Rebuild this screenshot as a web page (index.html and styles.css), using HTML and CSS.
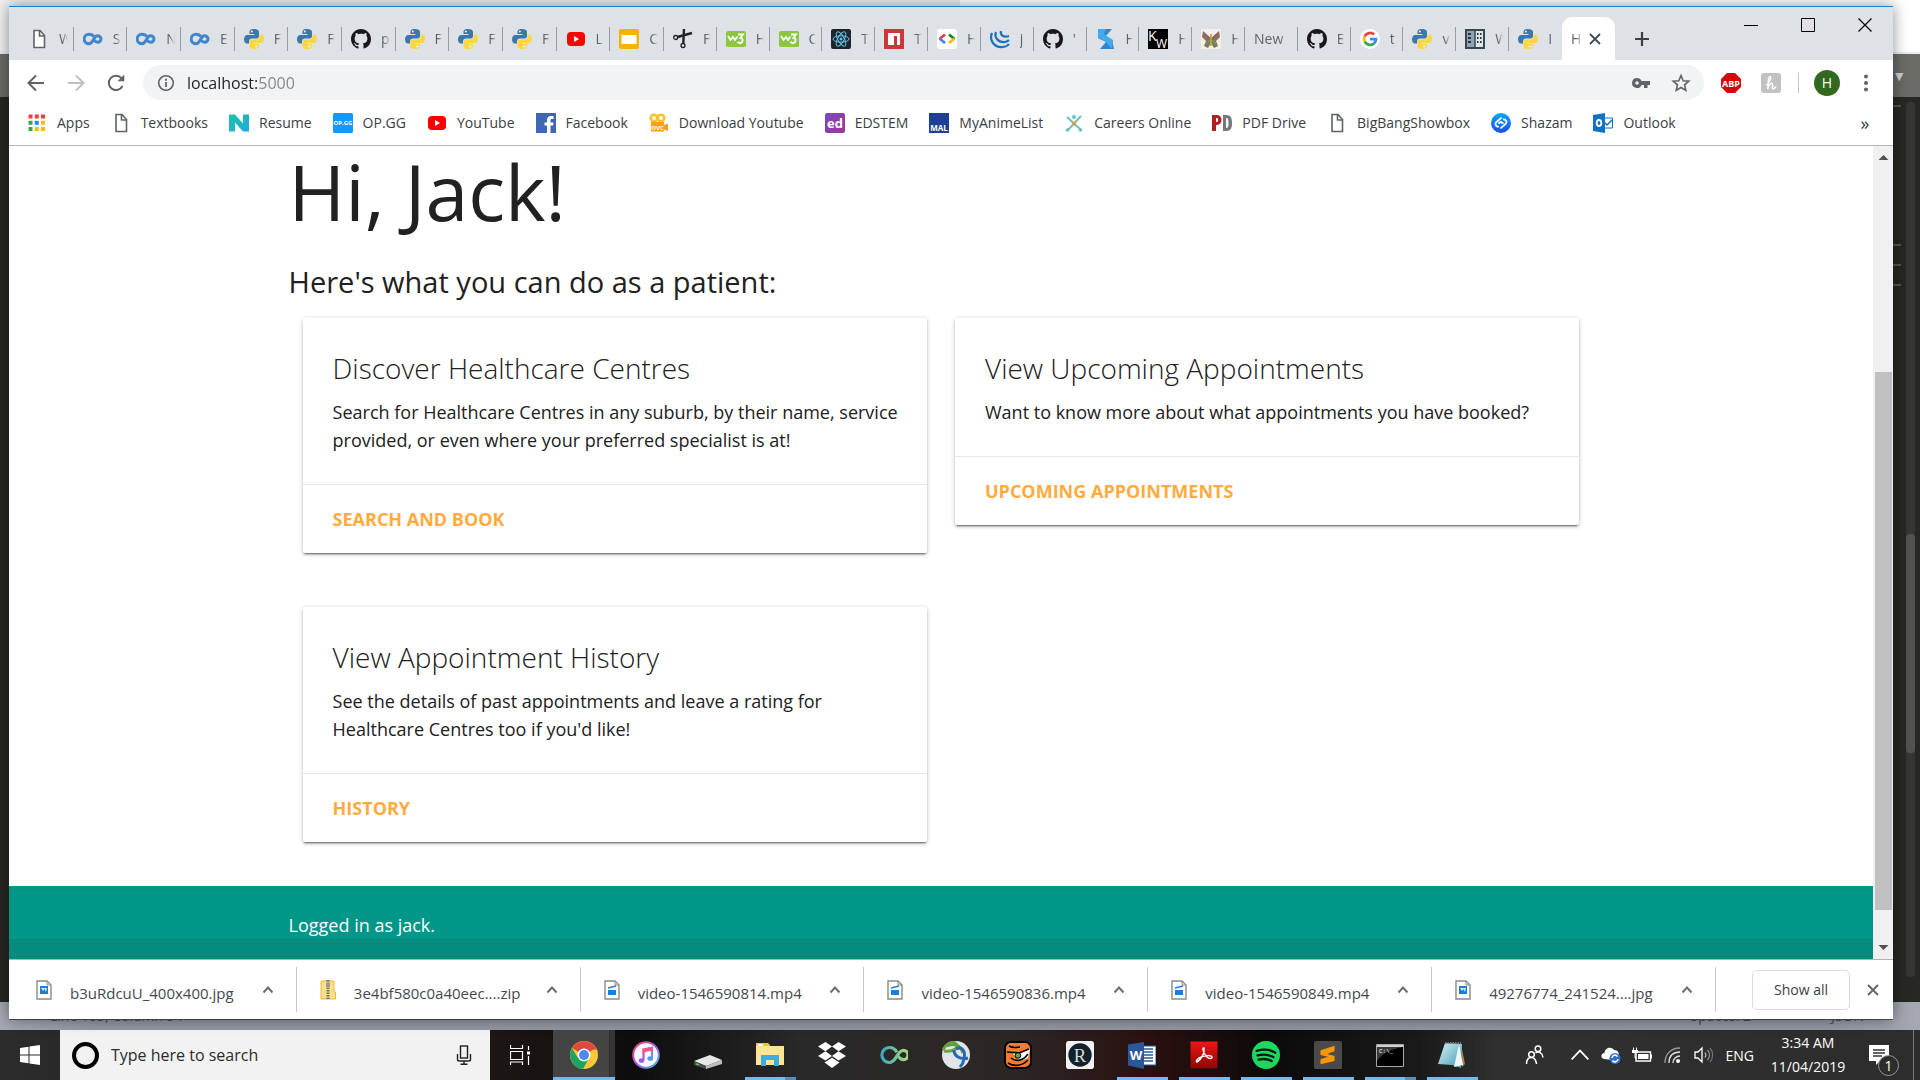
FILE: index.html
```html
<!DOCTYPE html>
<html lang="en">
<head>
<meta charset="utf-8">
<title>Home</title>
<link rel="stylesheet" href="styles.css">
</head>
<body>
<svg class="sprite" aria-hidden="true">
  <defs>
    <linearGradient id="g-n" x1="0" x2="1" y2="1"><stop stop-color="#1cc4a4"/><stop offset="1" stop-color="#24a8e0"/></linearGradient>
    <linearGradient id="g-ed" x1="0" x2="1" y2="1"><stop stop-color="#7a4bb8"/><stop offset="1" stop-color="#a0359c"/></linearGradient>
    <linearGradient id="g-shz" x2="0" y2="1"><stop stop-color="#08a8ff"/><stop offset="1" stop-color="#1a4cf5"/></linearGradient>
    <linearGradient id="g-it" x1="0" x2="1" y2="1"><stop stop-color="#fb3f6c"/><stop offset=".5" stop-color="#a65df0"/><stop offset="1" stop-color="#2fc3f5"/></linearGradient>
    <linearGradient id="g-inf" x1="0" x2="1"><stop stop-color="#3aa7c4"/><stop offset="1" stop-color="#a8dc7a"/></linearGradient>
    <linearGradient id="g-pdf" x2="0" y2="1"><stop stop-color="#f01414"/><stop offset="1" stop-color="#8c0606"/></linearGradient>
    <linearGradient id="g-np" x1="0" x2="1" y2="1"><stop stop-color="#d8f2f6"/><stop offset="1" stop-color="#3f9bb0"/></linearGradient>
  </defs>
  <symbol id="page" viewBox="0 0 20 20"><path d="M5 1.500h6l4.500 5v12H5z" fill="#fff" stroke="#5f6368" stroke-width="1.600"/><path d="M10.500 1.500v5.500h5" fill="none" stroke="#5f6368" stroke-width="1.600"/></symbol>
  <symbol id="coursera" viewBox="0 0 20 20"><path d="M10.800 7.200C9.600 5.900 8 5.200 6 5.200a4.800 4.800 0 0 0 0 9.600c4.800 0 4-8 8.500-8 1.800 0 3.500 1.400 3.500 3.200s-1.500 3.200-3.500 3.200c-1.500 0-2.500-.8-3.200-1.900" fill="none" stroke="#3f86cf" stroke-width="3"/></symbol>
  <symbol id="python" viewBox="0 0 20 20"><path d="M10 0C6 0 5.500 1.500 5.500 3v2h5v1H3.500C1.500 6 0 7.500 0 10.300s1.300 4.200 3 4.200H5v-2.300C5 10.500 6.300 9.500 8 9.500h4.500c1.500 0 2.500-1 2.500-2.500V3c0-2-2-3-5-3z" fill="#3b77a8"/><circle cx="7.800" cy="2.600" r="1" fill="#fff"/><path d="M10 20c4 0 4.800-1.500 4.800-3v-2h-5v-1h7c2 0 3.200-1.500 3.200-4.300S18.700 5.500 17 5.500h-1.300v2.300c0 1.700-1.300 2.700-3 2.700H8.300C6.800 10.500 5.500 11.500 5.500 13v4c0 2 1.500 3 4.500 3z" fill="#fdd644"/><circle cx="12.300" cy="17.400" r="1" fill="#fff"/></symbol>
  <symbol id="github" viewBox="0 0 16 16"><path fill="#17181b" d="M8 0C3.580 0 0 3.580 0 8c0 3.540 2.290 6.530 5.470 7.590.4.070.55-.17.55-.38 0-.19-.01-.82-.01-1.490-2.010.37-2.530-.49-2.690-.94-.09-.23-.48-.94-.82-1.130-.28-.15-.68-.52-.01-.53.63-.01 1.080.58 1.230.82.720 1.210 1.870.87 2.330.66.070-.52.280-.87.510-1.070-1.780-.2-3.640-.89-3.640-3.950 0-.87.310-1.590.82-2.150-.08-.2-.36-1.020.08-2.120 0 0 .67-.21 2.200.82.640-.18 1.320-.27 2-.27s1.360.09 2 .27c1.530-1.040 2.200-.82 2.200-.82.440 1.100.16 1.920.08 2.120.510.56.820 1.270.820 2.150 0 3.070-1.870 3.750-3.650 3.950.29.250.54.730.54 1.480 0 1.070-.01 1.930-.01 2.200 0 .21.150.46.550.38A8.010 8.010 0 0 0 16 8c0-4.420-3.580-8-8-8z"/></symbol>
  <symbol id="youtube" viewBox="0 0 20 20"><rect x="1" y="3" width="18" height="14" rx="4" fill="#f00"/><path d="M8 7l5 3-5 3z" fill="#fff"/></symbol>
  <symbol id="slides" viewBox="0 0 20 20"><rect width="20" height="20" rx="2" fill="#f5b400"/><rect x="2.500" y="6" width="15" height="9" fill="#fff"/></symbol>
  <symbol id="scissors" viewBox="0 0 20 20"><path d="M4.500 8L19 4M10.300 14.500L11 0" stroke="#222" stroke-width="2.400"/><circle cx="2.700" cy="8.500" r="2" fill="none" stroke="#222" stroke-width="1.300"/><circle cx="10" cy="16.500" r="2" fill="none" stroke="#222" stroke-width="1.300"/></symbol>
  <symbol id="w3" viewBox="0 0 20 20"><rect y="2" width="20" height="16" rx="2" fill="#8ac73e"/><path d="M2 7l2.500 4 2.500-3 2 3 2.500-3.500M12 5.500h5l-2.500 3.300c3 0 2.800 5.200-.5 5.200-1.200 0-2-.4-2.500-1.300" fill="none" stroke="#fff" stroke-width="1.800"/></symbol>
  <symbol id="react" viewBox="0 0 20 20"><rect width="20" height="20" rx="2" fill="#20232a"/><g fill="none" stroke="#61c8e6" stroke-width="1"><ellipse cx="10" cy="10" rx="8" ry="3.200"/><ellipse cx="10" cy="10" rx="8" ry="3.200" transform="rotate(60 10 10)"/><ellipse cx="10" cy="10" rx="8" ry="3.200" transform="rotate(120 10 10)"/></g><circle cx="10" cy="10" r="1.500" fill="#61c8e6"/></symbol>
  <symbol id="npm" viewBox="0 0 20 20"><path fill="#cb3837" d="M0 0h20v20H0z"/><path fill="#fff" d="M4 4h12v12h-3V7h-3v9H4z"/></symbol>
  <symbol id="gdev" viewBox="0 0 20 20"><rect width="20" height="20" rx="3" fill="#fff"/><g fill="none" stroke-width="2.800"><path d="M8 5.500L2.500 10" stroke="#ea4335"/><path d="M2.500 9.500L8 14" stroke="#4285f4"/><path d="M12 5.500l5.500 4.500" stroke="#188038"/><path d="M17.500 9.500L12 14" stroke="#fbbc04"/></g></symbol>
  <symbol id="jquery" viewBox="0 0 20 20"><g fill="none" stroke="#1b74b8" stroke-width="2.200"><path d="M2 4c-3 7 2 15 11 14 3-.3 5-1.500 6-3"/><path d="M6 3c-2 5 2 11 9 10 2-.3 3-1 4-2"/><path d="M11 2c-1 3.500 2 7 8 5"/></g></symbol>
  <symbol id="sk" viewBox="0 0 20 20"><path d="M2 0h14L9 8H2z" fill="#2f86cf"/><path d="M18 20H4l6-7-8-4V4l14 7z" fill="#2f86cf"/><path d="M2 0h8l-2 5 9 6-1 9-6-7-8-5z" fill="#45a9ee"/></symbol>
  <symbol id="moth" viewBox="0 0 20 20"><path d="M0 0h20v20H0z" fill="#f4f0ea"/><path d="M10 9L2 2 1 8l4 4-2 5 4 2 3-5 3 5 4-2-2-5 4-4-1-6z" fill="#85735f"/><path d="M3 4l6 8M17 4l-6 8" stroke="#b5477f"/><path d="M5 15l4-4M15 15l-4-4" stroke="#5aa85a" stroke-width="1.500"/><path d="M10 5v12" stroke="#c9a227" stroke-width="1.600"/></symbol>
  <symbol id="google" viewBox="0 0 20 20"><circle cx="10" cy="10" r="10" fill="#fff"/><g fill="none" stroke-width="2.800"><path d="M14.200 5.600A6 6 0 0 0 4.700 7.300" stroke="#ea4335"/><path d="M4.700 7.300a6 6 0 0 0 0 5.400" stroke="#fbbc05"/><path d="M4.700 12.700a6 6 0 0 0 9.300 1.700" stroke="#34a853"/><path d="M14 14.400c1.300-1.100 2-2.700 2-4.300h-6" stroke="#4285f4"/></g></symbol>
  <symbol id="wiki" viewBox="0 0 20 20"><path d="M1 1h18v18H1z" fill="#8fa6b2" stroke="#37474f" stroke-width="2"/><path d="M10 2h8v16h-8z" fill="#dfe6ea"/><path d="M10 1v18" stroke="#37474f" stroke-width="1.500"/><path d="M3 5h3M3 9h3M3 13h3M12 5h1.500M12 9h1.500M12 13h1.500M15 5h1.500M15 9h1.500M15 13h1.500" stroke="#263238" stroke-width="2"/></symbol>

  <symbol id="back" viewBox="0 0 20 20"><path d="M18 10H3M10 2.500L2.500 10l7.500 7.500" fill="none" stroke="currentColor" stroke-width="2"/></symbol>
  <symbol id="fwd" viewBox="0 0 20 20"><path d="M2 10h15M10 2.500l7.500 7.500-7.500 7.500" fill="none" stroke="currentColor" stroke-width="2"/></symbol>
  <symbol id="reload" viewBox="0 0 20 20"><path d="M16.500 13A7.200 7.200 0 1 1 15.500 5.200" fill="none" stroke="currentColor" stroke-width="2"/><path d="M18.300 1.500v6.800h-6.800z" fill="currentColor"/></symbol>
  <symbol id="info" viewBox="0 0 20 20"><circle cx="10" cy="10" r="7.300" fill="none" stroke="#5f6368" stroke-width="1.600"/><path d="M10 9v5M10 5.800v2" stroke="#5f6368" stroke-width="1.800"/></symbol>
  <symbol id="key" viewBox="0 0 20 20"><path d="M6 5a5 5 0 1 0 4.600 7H13v3h3.500v-3H19V8h-8.400A5 5 0 0 0 6 5zm0 3.200a1.800 1.800 0 1 1 0 3.600 1.800 1.800 0 0 1 0-3.600z" fill="#5f6368" fill-rule="evenodd"/></symbol>
  <symbol id="star" viewBox="0 0 20 20"><path d="M10 2.500l2.200 5.200 5.600.5-4.200 3.700 1.200 5.500-4.800-2.900-4.800 2.900 1.200-5.500-4.200-3.700 5.600-.5z" fill="none" stroke="#5f6368" stroke-width="1.600"/></symbol>
  <symbol id="honey" viewBox="0 0 20 20"><rect width="20" height="20" rx="3" fill="#c2c2c2"/><path d="M5 12c3.500-2 6-8 4-8.500-2 0-2 7-2.200 12.500 1-4 3-6.500 4.500-5.500s-.8 4 .2 5 2.500-.5 3.500-2" fill="none" stroke="#fff" stroke-width="1.500"/></symbol>

  <symbol id="apps" viewBox="0 0 20 20"><path d="M1.500 1.500h4v4h-4zM7.800 1.500h4v4h-4zM14 1.500h4v4h-4z" fill="#ea4335"/><path d="M1.500 7.800h4v4h-4zM1.500 14h4v4h-4z" fill="#34a853"/><path d="M7.800 7.800h4v4h-4z" fill="#1a8cff"/><path d="M14 7.800h4v4h-4zM14 14h4v4h-4zM7.800 14h4v4h-4z" fill="#fbbc05"/></symbol>
  <symbol id="novo" viewBox="0 0 20 20"><path d="M0 1.500h6l8 9V1.500h6v17h-6l-8-9v9H0z" fill="url(#g-n)"/></symbol>
  <symbol id="facebook" viewBox="0 0 20 20"><path fill="#4267b2" d="M0 0h20v20H0z"/><path fill="#fff" d="M11 20v-7.500H8.500v-3H11V7.200C11 4.500 12.500 3 15 3h2.500v3h-1.800c-1 0-1.200.5-1.200 1.300v2.200h3l-.4 3h-2.600V20z"/></symbol>
  <symbol id="careers" viewBox="0 0 20 20"><path d="M3 4l14 13M17 3L4 17" stroke="#6cc0bf" stroke-width="2"/><circle cx="10" cy="4" r="2" fill="#6cc0bf"/><circle cx="3.500" cy="17" r="1.800" fill="#6cc0bf"/><circle cx="16.500" cy="17" r="1.800" fill="#6cc0bf"/><circle cx="10" cy="10.500" r="2" fill="#f39a2d"/></symbol>
  <symbol id="pdfdrive" viewBox="0 0 20 20"><path fill-rule="evenodd" d="M0 2h5c6 0 6 10 0 10H4v6H0zm4 3v4h1c1.500 0 1.500-4 0-4z" fill="#b01f24"/><path fill-rule="evenodd" d="M11 2h3c5 0 6 3 6 8s-1 8-6 8h-3zm3 3v10c2 0 2.500-1 2.500-5S16 5 14 5z" fill="#77787b"/></symbol>
  <symbol id="shazam" viewBox="0 0 20 20"><circle cx="10" cy="10" r="10" fill="url(#g-shz)"/><path d="M8 13.500c-2 .5-3.500-1-3.500-2.800C4.500 8.500 8 7.500 10.500 4.500M12 6.500c2-.5 3.500 1 3.500 2.800 0 2.200-3.500 3.200-6 6.200M7.500 10.500l2-1.500c1-.5 1 2 3 .5" fill="none" stroke="#fff" stroke-width="1.800"/></symbol>
  <symbol id="outlook" viewBox="0 0 20 20"><path d="M10 5h9.500v10H10z" fill="#fff" stroke="#0f72c5"/><path d="M11 9l3 3 5-5" fill="none" stroke="#0f72c5" stroke-width="1.500"/><path d="M0 2l12-2v20L0 18z" fill="#0f72c5"/><ellipse cx="6" cy="10" rx="2.300" ry="3" fill="none" stroke="#fff" stroke-width="1.800"/></symbol>

  <symbol id="f-jpg" viewBox="0 0 16 20"><path d="M1 1h10l4 4v14H1z" fill="#fff" stroke="#8a8a8a" stroke-width="1.400"/><path d="M11 1v4h4" fill="none" stroke="#8a8a8a"/><path d="M4 6h8v8H4z" fill="#1b7fd8"/><path d="M5 8l2 3 1.500-2 1.500 3 1-4z" fill="#cfe6fa"/></symbol>
  <symbol id="f-mp4" viewBox="0 0 16 20"><path d="M1 1h10l4 4v14H1z" fill="#fff" stroke="#8a8a8a" stroke-width="1.400"/><path d="M11 1v4h4" fill="none" stroke="#8a8a8a"/><path d="M4 10h8v5H4z" fill="#1b7fd8"/><path d="M4 8l8-2" stroke="#1b7fd8" stroke-width="1.800"/></symbol>
  <symbol id="f-zip" viewBox="0 0 16 20"><path d="M1 1h13v11h1.500v7H1z" fill="#fbe08a" stroke="#e8b93c"/><path d="M8 0v19" stroke="#6f6f6f" stroke-width="3" stroke-dasharray="1.500 1"/><path d="M6 3h4v4H6z" fill="#9a9a9a"/></symbol>
  <symbol id="caret" viewBox="0 0 12 12"><path d="M1.500 8.500L6 3.500l4.500 5" fill="none" stroke="currentColor" stroke-width="2"/></symbol>
  <symbol id="cross" viewBox="0 0 12 12"><path d="M1 1l10 10M11 1L1 11" stroke="currentColor" stroke-width="1.800"/></symbol>

  <symbol id="windows" viewBox="0 0 20 20"><path fill="#fff" d="M0 3l8.500-1.200v7.700H0zM9.500 1.600L20 0v9.500H9.500zM0 10.500h8.500v7.700L0 17zM9.500 10.500H20V20L9.500 18.400z"/></symbol>
  <symbol id="mic" viewBox="0 0 20 20"><rect x="6.500" y="1" width="7" height="12" fill="none" stroke="#222" stroke-width="1.400"/><path d="M3.500 9v5.500c0 1 1 1.500 2 1.500h9c1 0 2-.5 2-1.500V9M10 16v3.500M6.500 19.300h7" fill="none" stroke="#222" stroke-width="1.400"/></symbol>
  <symbol id="taskview" viewBox="0 0 20 20"><path d="M.5 6.500h12v8H.5zM.5 0v3.500h12V0M.5 20v-3h12v3M18.500 1v4M18.500 11v9" fill="none" stroke="#fff" stroke-width="1.200"/><path d="M17 6.500h3v3h-3z" fill="#fff"/></symbol>
  <symbol id="chrome" viewBox="0 0 28 28"><circle cx="14" cy="14" r="14" fill="#fcc934"/><path d="M14 14L1.900 7A14 14 0 0 1 26.100 7z" fill="#dd4b3e"/><path d="M1.900 7A14 14 0 0 0 13 28l6.500-11.500L14 14 8 17z" fill="#1da462"/><path d="M14 7h12.200l.6 1.500H16z" fill="#dd4b3e"/><circle cx="14" cy="14" r="6.500" fill="#fff"/><circle cx="14" cy="14" r="5" fill="#4a8af4"/></symbol>
  <symbol id="itunes" viewBox="0 0 28 28"><circle cx="14" cy="14" r="12.800" fill="#fbfbff" stroke="url(#g-it)" stroke-width="2"/><path d="M11.500 19V9L20 7v10" fill="none" stroke="url(#g-it)" stroke-width="2.200"/><path d="M10.500 7.500L21 5.500v4l-10.500 2z" fill="#f0568c"/><ellipse cx="9.500" cy="19.500" rx="2.800" ry="2.300" fill="#8f5ff0"/><ellipse cx="18.200" cy="17.500" rx="2.800" ry="2.300" fill="#4d9bf5"/></symbol>
  <symbol id="drive" viewBox="0 0 28 28"><path d="M0 20l16-6 12 5-16 6z" fill="#e6e6e6"/><path d="M0 20v4l12 4v-3z" fill="#4a4a4a"/><path d="M12 25l16-6v4l-16 5z" fill="#bdbdbd"/><path d="M2 23l3 .8" stroke="#45d645" stroke-width="1.500"/></symbol>
  <symbol id="explorer" viewBox="0 0 28 28"><path d="M0 2h12l2 2v3H0z" fill="#fbc02d"/><path d="M0 5h28v19H0z" fill="#ffe594"/><path d="M2 3h5v2H2z" fill="#fff"/><path d="M5 25V14h18v11h-5v-6h-8v6z" fill="#38aee6"/></symbol>
  <symbol id="dropbox" viewBox="0 0 30 28"><path fill="#fff" d="M8 0l7 5-7 5-8-5zM22 0l8 5-8 5-7-5zM0 15l8-5 7 5-7 5zM22 10l8 5-8 5-7-5zM7 22l8-5 8 5-8 6z"/></symbol>
  <symbol id="infinity" viewBox="0 0 30 28"><path d="M18 11c-1.500-3-4-5-8-5a8 8 0 0 0 0 16c8 0 8-13 15-13a5 5 0 0 1 0 10c-4 0-5-3-7-6" fill="none" stroke="url(#g-inf)" stroke-width="3.400"/></symbol>
  <symbol id="globe" viewBox="0 0 28 28"><circle cx="14" cy="14" r="14" fill="#dfe5ea"/><path d="M1 9C5 1 12 0 14 3c3 4-2 8-12 7" fill="none" stroke="#6ba539" stroke-width="3"/><path d="M5 5c8-4 14 0 16 7" fill="none" stroke="#5f9c48" stroke-width="3"/><path d="M12 9c0 6 6 10 14 8M14 8c6-3 10 2 8 10-.5 3-2 6-4 8" fill="none" stroke="#2a66ad" stroke-width="3"/></symbol>
  <symbol id="tiger" viewBox="0 0 28 28"><rect x="1" y="1" width="26" height="26" rx="6" fill="#f47b30" stroke="#000" stroke-width="2"/><path d="M8 11l9 1 9-4-2 9-9 3z" fill="#fff"/><path d="M5 5c5 3 8 1 11 1M4 22c6 4 14 3 20-3M3 11l12 1 10-4M7 17c5 4 12 3 17-4" fill="none" stroke="#000" stroke-width="1.600"/><circle cx="14" cy="14.500" r="2.800" fill="#55b04c" stroke="#000"/></symbol>
  <symbol id="acrobat" viewBox="0 0 28 28"><path d="M.5.500h27v27H.5z" fill="url(#g-pdf)"/><path d="M7 21c4-2 8-9 7-14-2-1-1 5 3 9 2 2 5 2 5 0s-8-2-13 1c-3 2-3 4-2 4z" fill="none" stroke="#fff" stroke-width="1.500"/></symbol>
  <symbol id="spotify" viewBox="0 0 30 30"><circle cx="15" cy="15" r="15" fill="#1ed760"/><path d="M5 10.500c7-2 14-1.500 20 2M6 15.500c6-1.500 12-1 17 1.800M7 20c5-1.200 10-.8 14 1.500" fill="none" stroke="#0b1a10" stroke-width="2.500" stroke-linecap="round"/></symbol>
  <symbol id="sublime" viewBox="0 0 30 30"><rect width="30" height="30" rx="2" fill="#4a4a4a"/><path d="M7 10l15-5v6l-8 3 8 2v5.500L7 25v-5.500l8-2.500-8-2z" fill="#ff9800"/></symbol>
  <symbol id="notepad" viewBox="0 0 28 28"><path d="M23 3l4 20-3 3z" fill="#a98546"/><path d="M7 2l17 1-1 24-9-3L0 23z" fill="url(#g-np)"/><path d="M21 3l4 21-9 2z" fill="#eef6f7"/><path d="M7 2h16" stroke="#7b7b7b" stroke-width="2" stroke-dasharray="1.500 1"/></symbol>
  <symbol id="people" viewBox="0 0 20 20"><g fill="none" stroke="#fff" stroke-width="1.500"><circle cx="6.500" cy="9.500" r="2.800"/><path d="M1.500 19c0-4 2-6.500 5-6.500s4.500 3 5 6.500"/><circle cx="13" cy="3.800" r="2.800"/><path d="M10.500 8c3-2 7-.5 7.500 4.500"/></g></symbol>
  <symbol id="up" viewBox="0 0 18 18"><path d="M1.500 13L9 5l7.500 8" fill="none" stroke="#fff" stroke-width="1.500"/></symbol>
  <symbol id="cloud" viewBox="0 0 20 20"><path d="M3 14c-4-1-3-6 .5-6C4 3 10 1 13 5c4 0 5 3 5 5l-6 5z" fill="#fff"/><circle cx="14" cy="13.500" r="5.500" fill="#2f6fd0"/><path d="M11 13a3 3 0 0 1 5.500-1.500M17 14a3 3 0 0 1-5.500 1.500" fill="none" stroke="#fff" stroke-width="1.500"/></symbol>
  <symbol id="battery" viewBox="0 0 20 20"><path d="M4 7h14.500v9H4z" fill="none" stroke="#fff" stroke-width="1.400"/><path d="M6 9h10.500v5H6z" fill="#fff"/><path d="M19 9.500h1v4h-1z" fill="#fff"/><path d="M0 5h6v3H0z" fill="#fff"/><path d="M1.500 2.500v3M4.500 2.500v3M3 8v5h2" stroke="#fff" fill="none"/></symbol>
  <symbol id="wifi" viewBox="0 0 20 20"><g fill="none" stroke="#ddd" stroke-width="1.400"><path d="M2 18C2 9 8 3 17 3" opacity=".6"/><path d="M6 18c0-7 4-11 11-11M10 18c0-4 3-7 7-7"/></g><circle cx="15" cy="16" r="2" fill="#fff"/></symbol>
  <symbol id="volume" viewBox="0 0 20 20"><path d="M1 7h3l4-4v14l-4-4H1z" fill="none" stroke="#fff" stroke-width="1.300"/><g fill="none" stroke="#bbb" stroke-width="1.200"><path d="M11 7.500c1 1.500 1 3.500 0 5"/><path d="M13.500 5c2.500 3 2.500 7 0 10" opacity=".7"/><path d="M16 3c3.500 4 3.500 10 0 14" opacity=".5"/></g></symbol>
  <symbol id="note" viewBox="0 0 20 20"><path d="M0 0h20v16h-9l-4 4v-4H0z" fill="#fff"/><path d="M4 5h12M4 8h12M4 11h9" stroke="#333" stroke-width="1.300"/></symbol>
</svg>

<div class="workspace">
  <div class="editor">
    <div class="editor-title"></div>
    <div class="editor-tabs"><span>▼</span></div>
    <div class="editor-code">
      <div class="minimap"><i></i><i></i><i></i><i></i></div>
      <div class="editor-scroll"><i></i></div>
    </div>
    <div class="editor-status"><span>Line 103, Column 34</span><span>Spaces: 2</span><span>JSON</span></div>
  </div>

  <div class="browser">
    <div class="tabstrip">
      <div class="tabs">
        <button class="tab"><svg><use href="#page"/></svg><span>W</span></button>
        <button class="tab"><svg><use href="#coursera"/></svg><span>S</span></button>
        <button class="tab"><svg><use href="#coursera"/></svg><span>N</span></button>
        <button class="tab"><svg><use href="#coursera"/></svg><span>E</span></button>
        <button class="tab"><svg><use href="#python"/></svg><span>F</span></button>
        <button class="tab"><svg><use href="#python"/></svg><span>F</span></button>
        <button class="tab"><svg><use href="#github"/></svg><span>p</span></button>
        <button class="tab"><svg><use href="#python"/></svg><span>F</span></button>
        <button class="tab"><svg><use href="#python"/></svg><span>F</span></button>
        <button class="tab"><svg><use href="#python"/></svg><span>F</span></button>
        <button class="tab"><svg><use href="#youtube"/></svg><span>L</span></button>
        <button class="tab"><svg><use href="#slides"/></svg><span>C</span></button>
        <button class="tab"><svg><use href="#scissors"/></svg><span>F</span></button>
        <button class="tab"><svg><use href="#w3"/></svg><span>H</span></button>
        <button class="tab"><svg><use href="#w3"/></svg><span>C</span></button>
        <button class="tab"><svg><use href="#react"/></svg><span>T</span></button>
        <button class="tab"><svg><use href="#npm"/></svg><span>T</span></button>
        <button class="tab"><svg><use href="#gdev"/></svg><span>H</span></button>
        <button class="tab"><svg><use href="#jquery"/></svg><span>j</span></button>
        <button class="tab"><svg><use href="#github"/></svg><span>'</span></button>
        <button class="tab"><svg><use href="#sk"/></svg><span>H</span></button>
        <button class="tab"><svg viewBox="0 0 20 20"><path d="M0 0h20v20H0z"/><text x="0" y="12" class="glyph" font-size="14" fill="#fff">K</text><text x="8" y="19" class="glyph" font-size="12" fill="#fff">W</text></svg><span>H</span></button>
        <button class="tab"><svg><use href="#moth"/></svg><span>H</span></button>
        <button class="tab tab-text"><span>New</span></button>
        <button class="tab"><svg><use href="#github"/></svg><span>E</span></button>
        <button class="tab"><svg><use href="#google"/></svg><span>t</span></button>
        <button class="tab"><svg><use href="#python"/></svg><span>v</span></button>
        <button class="tab"><svg><use href="#wiki"/></svg><span>W</span></button>
        <button class="tab last"><svg><use href="#python"/></svg><span>I</span></button>
      </div>
      <button class="tab active"><span>H</span><svg><use href="#cross"/></svg></button>
      <button class="new-tab" aria-label="New tab"><svg viewBox="0 0 16 16"><path d="M8 1v14M1 8h14" stroke="#3c4043" stroke-width="2.200"/></svg></button>
      <div class="win-controls">
        <button aria-label="Minimise"><svg viewBox="0 0 14 14"><path d="M0 7.500h14" stroke="#000"/></svg></button>
        <button aria-label="Maximise"><svg viewBox="0 0 14 14"><path d="M.5.500h13v13H.5z" fill="none" stroke="#000"/></svg></button>
        <button aria-label="Close"><svg viewBox="0 0 14 14"><path d="M.5.500l13 13M13.500.500l-13 13" stroke="#000" stroke-width="1.200"/></svg></button>
      </div>
    </div>

    <div class="toolbar">
      <button aria-label="Back"><svg><use href="#back"/></svg></button>
      <button aria-label="Forward" class="off"><svg><use href="#fwd"/></svg></button>
      <button aria-label="Reload"><svg><use href="#reload"/></svg></button>
      <div class="omnibox">
        <svg><use href="#info"/></svg>
        <input type="text" value="localhost:5000" aria-label="Address">
        <button aria-label="Passwords"><svg><use href="#key"/></svg></button>
        <button aria-label="Bookmark"><svg><use href="#star"/></svg></button>
      </div>
      <button aria-label="Adblock Plus"><svg viewBox="0 0 20 20"><path d="M6 0h8l6 6v8l-6 6H6l-6-6V6z" fill="#d00a0a"/><text x="10" y="13.500" text-anchor="middle" class="glyph" font-size="9" font-weight="700" fill="#fff">ABP</text></svg></button>
      <button aria-label="Honey"><svg><use href="#honey"/></svg></button>
      <i class="bar-rule"></i>
      <button class="avatar">H</button>
      <button aria-label="Menu"><svg viewBox="0 0 20 20"><g fill="#5f6368"><circle cx="10" cy="3.500" r="2"/><circle cx="10" cy="10" r="2"/><circle cx="10" cy="16.500" r="2"/></g></svg></button>
    </div>

    <nav class="bookmarks">
      <a href="#"><svg><use href="#apps"/></svg>Apps</a>
      <a href="#"><svg><use href="#page"/></svg>Textbooks</a>
      <a href="#"><svg><use href="#novo"/></svg>Resume</a>
      <a href="#"><svg viewBox="0 0 20 20"><rect width="20" height="20" rx="1.500" fill="#1598f7"/><text x="10" y="12" text-anchor="middle" class="glyph" font-size="6" font-weight="700" fill="#fff">OP.GG</text></svg>OP.GG</a>
      <a href="#"><svg><use href="#youtube"/></svg>YouTube</a>
      <a href="#"><svg><use href="#facebook"/></svg>Facebook</a>
      <a href="#"><svg viewBox="0 0 20 20"><circle cx="5" cy="5" r="3.300" fill="none" stroke="#fbc02d" stroke-width="2.600"/><circle cx="12" cy="5" r="3.300" fill="none" stroke="#fbc02d" stroke-width="2.600"/><path d="M2 9h13v3l4-1.500v7.500l-4-1.500v2H2z" fill="#f9a01b"/><text x="8.500" y="16.500" text-anchor="middle" class="glyph" font-size="6" font-weight="700" fill="#fff">OVC</text></svg>Download Youtube</a>
      <a href="#"><svg viewBox="0 0 20 20"><rect width="20" height="20" rx="2" fill="url(#g-ed)"/><text x="10" y="15" text-anchor="middle" class="glyph" font-size="13" font-weight="700" fill="#fff">ed</text></svg>EDSTEM</a>
      <a href="#"><svg viewBox="0 0 20 20"><path fill="#1f3f97" d="M0 0h20v20H0z"/><text x="10" y="18" text-anchor="middle" class="glyph" font-size="8" font-weight="700" fill="#fff">MAL</text></svg>MyAnimeList</a>
      <a href="#"><svg><use href="#careers"/></svg>Careers Online</a>
      <a href="#"><svg><use href="#pdfdrive"/></svg>PDF Drive</a>
      <a href="#"><svg><use href="#page"/></svg>BigBangShowbox</a>
      <a href="#"><svg><use href="#shazam"/></svg>Shazam</a>
      <a href="#"><svg><use href="#outlook"/></svg>Outlook</a>
      <button aria-label="More bookmarks">»</button>
    </nav>

    <div class="viewport">
      <div class="page">
        <main class="container">
          <h1>Hi, Jack!</h1>
          <h2>Here's what you can do as a patient:</h2>
          <div class="cards">
            <article class="card">
              <div class="card-content"><h3>Discover Healthcare Centres</h3><p>Search for Healthcare Centres in any suburb, by their name, service provided, or even where your preferred specialist is at!</p></div>
              <div class="card-action"><a href="#">Search and book</a></div>
            </article>
            <article class="card">
              <div class="card-content"><h3>View Upcoming Appointments</h3><p>Want to know more about what appointments you have booked?</p></div>
              <div class="card-action"><a href="#">Upcoming appointments</a></div>
            </article>
            <article class="card">
              <div class="card-content"><h3>View Appointment History</h3><p>See the details of past appointments and leave a rating for Healthcare Centres too if you'd like!</p></div>
              <div class="card-action"><a href="#">History</a></div>
            </article>
          </div>
        </main>
        <footer><div class="container">Logged in as jack.</div><div class="footer-copy"></div></footer>
      </div>
      <div class="scrollbar">
        <svg viewBox="0 0 20 20"><path d="M5.500 14l5-5 5 5z" fill="#505050"/></svg>
        <div class="track"><i></i></div>
        <svg viewBox="0 0 20 20"><path d="M5.500 6l5 5 5-5z" fill="#505050"/></svg>
      </div>
    </div>

    <div class="downloads">
      <div class="files">
        <button class="file"><svg><use href="#f-jpg"/></svg><span>b3uRdcuU_400x400.jpg</span><svg class="caret"><use href="#caret"/></svg></button>
        <button class="file"><svg><use href="#f-zip"/></svg><span>3e4bf580c0a40eec....zip</span><svg class="caret"><use href="#caret"/></svg></button>
        <button class="file"><svg><use href="#f-mp4"/></svg><span>video-1546590814.mp4</span><svg class="caret"><use href="#caret"/></svg></button>
        <button class="file"><svg><use href="#f-mp4"/></svg><span>video-1546590836.mp4</span><svg class="caret"><use href="#caret"/></svg></button>
        <button class="file"><svg><use href="#f-mp4"/></svg><span>video-1546590849.mp4</span><svg class="caret"><use href="#caret"/></svg></button>
        <button class="file"><svg><use href="#f-jpg"/></svg><span>49276774_241524....jpg</span><svg class="caret"><use href="#caret"/></svg></button>
      </div>
      <button class="show-all">Show all</button>
      <button class="close" aria-label="Close downloads"><svg><use href="#cross"/></svg></button>
    </div>
  </div>
</div>

<div class="taskbar">
  <button class="start" aria-label="Start"><svg><use href="#windows"/></svg></button>
  <label class="search"><i></i><input type="text" placeholder="Type here to search" aria-label="Search"><svg><use href="#mic"/></svg></label>
  <button class="taskview" aria-label="Task view"><svg><use href="#taskview"/></svg></button>
  <div class="apps">
    <button class="app current" aria-label="Chrome"><svg><use href="#chrome"/></svg></button>
    <button class="app" aria-label="iTunes"><svg><use href="#itunes"/></svg></button>
    <button class="app" aria-label="Drive"><svg><use href="#drive"/></svg></button>
    <button class="app open stacked" aria-label="Explorer"><svg><use href="#explorer"/></svg></button>
    <button class="app" aria-label="Dropbox"><svg><use href="#dropbox"/></svg></button>
    <button class="app" aria-label="Infinity"><svg><use href="#infinity"/></svg></button>
    <button class="app" aria-label="AnyConnect"><svg><use href="#globe"/></svg></button>
    <button class="app" aria-label="Tiger"><svg><use href="#tiger"/></svg></button>
    <button class="app" aria-label="R"><svg viewBox="0 0 30 30"><rect width="30" height="30" rx="3" fill="#f2f2f2"/><circle cx="15" cy="15" r="12.500" fill="#12222d"/><text x="15" y="22" text-anchor="middle" class="serif" font-size="20" fill="#d8d8d8">R</text></svg></button>
    <button class="app open" aria-label="Word"><svg viewBox="0 0 28 28"><path d="M14 5h14v19H14z" fill="#fff" stroke="#2b579a"/><path d="M15 8h10M15 11h10M15 14h10M15 17h10M15 20h10" stroke="#2b579a" stroke-width="1.500"/><path d="M0 3.500L16 1v27L0 24.500z" fill="#2b579a"/><text x="8" y="19" text-anchor="middle" class="glyph" font-size="13" font-weight="700" fill="#fff">W</text></svg></button>
    <button class="app open" aria-label="Acrobat"><svg><use href="#acrobat"/></svg></button>
    <button class="app open" aria-label="Spotify"><svg><use href="#spotify"/></svg></button>
    <button class="app open" aria-label="Sublime Text"><svg><use href="#sublime"/></svg></button>
    <button class="app open stacked" aria-label="Command Prompt"><svg viewBox="0 0 28 28"><path d="M.5 3.500h27v22H.5z" fill="#000" stroke="#a8a8a8"/><path d="M1 4h26v2H1z" fill="#d0d0d0"/><path d="M1 6h26C16 8 6 12 1 20z" fill="#3a3a3a"/><text x="3" y="12" class="mono" font-size="6" fill="#fff">C:\_</text></svg></button>
    <button class="app open" aria-label="Notepad"><svg><use href="#notepad"/></svg></button>
  </div>
  <div class="tray">
    <svg class="people"><use href="#people"/></svg>
    <svg><use href="#up"/></svg>
    <svg><use href="#cloud"/></svg>
    <svg><use href="#battery"/></svg>
    <svg><use href="#wifi"/></svg>
    <svg><use href="#volume"/></svg>
    <span class="lang">ENG</span>
    <time class="clock">3:34 AM<br>11/04/2019</time>
    <button class="notes" aria-label="Notifications"><svg><use href="#note"/></svg><b>1</b></button>
  </div>
</div>
</body>
</html>
```
FILE: styles.css
```css
* { box-sizing: border-box; }

body {
  margin: 0;
  height: 100vh;
  display: grid;
  grid-template-rows: 1fr 50px;
  overflow: hidden;
  font-family: "Open Sans", "Noto Sans", sans-serif;
  font-size: 14px;
  color: #212121;
}

button {
  border: 0;
  padding: 0;
  background: none;
  font: inherit;
  color: inherit;
  display: flex;
  align-items: center;
  justify-content: center;
}

svg { width: 20px; height: 20px; flex: none; display: block; }
.sprite { position: absolute; width: 0; height: 0; }
.glyph { font-family: "Open Sans", sans-serif; }
.serif { font-family: "Liberation Serif", serif; }
.mono { font-family: "Liberation Mono", monospace; }
a { text-decoration: none; color: inherit; }

/* Editor window behind the browser */
.workspace { position: relative; min-height: 0; }
.editor { height: 100%; display: flex; flex-direction: column; background: #272822; }
.editor-title { height: 54px; background: linear-gradient(#f0f0f0, #f0f0f0) left / 50% 100% no-repeat #fff; border-bottom: 2px solid #ececec; }
.editor-tabs { height: 43px; background: #6b6b68; display: flex; justify-content: flex-end; align-items: center; padding-right: 14px; color: #d0d0d0; }
.editor-code { flex: 1; display: flex; justify-content: flex-end; padding: 5px 5px 25px 0; gap: 5px; }
.minimap { width: 9px; padding-top: 3px; }
.minimap i { display: block; height: 2px; background: #55564f; margin-bottom: 18px; }
.minimap i:first-child { margin-bottom: 137px; }
.editor-scroll { width: 9px; border-radius: 4px; background: #363732; padding-top: 432px; }
.editor-scroll i { display: block; height: 219px; border-radius: 4px; background: #52534d; }
.editor-status { height: 28px; background: linear-gradient(90deg, #a3a8b3, #9297a2 5%, #9297a2 95%, #a3a8b3); display: flex; gap: 80px; padding: 2px 56px 0 50px; line-height: 24px; color: #45484f; font-size: 14px; }
.editor-status span:first-child { flex: 1; }

/* Browser window */
.browser {
  position: absolute;
  inset: 6px 27px 11px 9px;
  display: flex;
  flex-direction: column;
  background: #fff;
  border-top: 1px solid #1f82d0;
  box-shadow: 0 0 14px rgba(0, 0, 0, .45), 0 1px 0 #555;
}

.tabstrip { height: 53px; background: #dee1e6; display: flex; align-items: flex-end; padding-left: 11px; }
.tabs { flex: 1; min-width: 0; display: flex; }
.tab { flex: 53 1 0; min-width: 0; height: 43px; padding-left: 9px; gap: 10px; justify-content: flex-start; position: relative; color: #5f6368; }
.tab:nth-child(-n+12) { flex-grow: 54; }
.tab span { flex: 1; min-width: 0; overflow: hidden; text-align: left; margin-right: 6px; mask-image: linear-gradient(90deg, #000 40%, transparent); }
.tabs .tab::after { content: ""; position: absolute; right: 0; top: 10px; width: 1px; height: 24px; background: #9a9da2; }
.tabs .last::after { display: none; }
.tab-text span { margin-right: 3px; mask-image: linear-gradient(90deg, #000 60%, transparent); }
.tabstrip > .active { flex: 0 0 53px; background: #fff; border-radius: 10px 10px 0 0; padding-right: 14px; gap: 6px; }
.active svg { width: 12px; height: 12px; color: #45494d; }
.active span { margin: 0; }
.new-tab { width: 53px; height: 43px; }
.new-tab svg { width: 16px; height: 16px; }
.win-controls { flex: 0 0 225px; padding-left: 54px; display: flex; align-self: flex-start; height: 36px; }
.win-controls button { width: 57px; }
.win-controls svg { width: 14px; height: 14px; }

.toolbar { height: 45px; display: flex; align-items: center; padding: 0 17px; gap: 20px; color: #5f6368; }
.toolbar .off { color: #bdc1c6; }
.omnibox { flex: 1; height: 35px; border-radius: 18px; background: #f1f3f4; display: flex; align-items: center; gap: 20px; padding: 0 13px; margin: 0 -3px; }
.omnibox input {
  flex: 1; min-width: 0; margin-left: -9px; padding: 0; border: 0; outline: 0;
  font: inherit; font-size: 16px; color: transparent;
  background: linear-gradient(90deg, #202124 71px, #80868b 71px);
  background-clip: text; -webkit-background-clip: text;
}
.bar-rule { width: 1px; height: 20px; background: #c4c7cb; margin: 0 -5px 0 -3px; }
.avatar { width: 26px; height: 26px; border-radius: 50%; background: #33691e; color: #fff; margin-right: -4px; }

.bookmarks { height: 41px; display: flex; align-items: center; gap: 21px; padding: 0 18px 5px; border-bottom: 1px solid #b4b4b4; color: #3c4043; }
.bookmarks a { display: flex; align-items: center; gap: 10px; white-space: nowrap; }
.bookmarks button { margin-left: auto; font-size: 18px; width: 20px; }

/* Web page */
.viewport { flex: 1; min-height: 0; display: flex; overflow: hidden; }
.page { flex: 1; overflow: hidden; font-size: 18px; line-height: 28px; }
.container { width: 70%; margin: 0 auto; }
h1, h2, h3, p { margin: 0; font-weight: 400; }
h1 { font-size: 77px; line-height: 92px; }
h2 { font-size: 29px; line-height: 40px; margin: 24px 0 16px; }
.cards { display: grid; grid-template-columns: 1fr 1fr; gap: 54px 28px; align-items: start; padding: 0 14px; }
.card { border-radius: 2px; background: #fff; box-shadow: 0 2px 2px rgba(0, 0, 0, .18), 0 3px 1px -2px rgba(0, 0, 0, .3), 0 1px 5px rgba(0, 0, 0, .2); }
.card-content { padding: 30px 24px 30px 30px; }
h3 { font-size: 28px; line-height: 40px; font-weight: 300; margin-bottom: 10px; }
.card-action { border-top: 1px solid #e8e8e8; padding: 20px 30px; }
.card-action a { color: #ffab40; font-weight: 700; text-transform: uppercase; }
footer { margin-top: 44px; padding-top: 25px; background: #009688; color: #fff; }
.footer-copy { height: 60px; background: #058c7f; }

.scrollbar { width: 20px; background: #f0f0f0; display: flex; flex-direction: column; }
.track { flex: 1; padding: 0 1px 0 2px; display: grid; grid-template-rows: 206fr 538fr 29fr; }
.track i { grid-row: 2; background: #c1c1c1; }

.downloads { height: 60px; border-top: 1px solid #b4b4b4; display: flex; align-items: center; padding: 0 13px 0 4px; }
.files { flex: 1; display: flex; }
.file { flex: 1; height: 45px; border-right: 1px solid #c8c8c8; padding: 0 22px 0 23px; color: #45494d; font-size: 15px; }
.file span { flex: 1; text-align: left; margin: 6px 0 0 18px; white-space: nowrap; }
.file svg { width: 16px; height: 20px; }
.file .caret { width: 12px; height: 12px; color: #6a6d71; }
.show-all { width: 98px; height: 40px; border: 1px solid #dadce0; border-radius: 5px; margin: 0 15px 0 36px; color: #3c4043; }
.close svg { width: 12px; height: 12px; color: #5f6368; }
.close { width: 15px; }

/* Taskbar */
.taskbar { display: flex; background: linear-gradient(90deg, #2c2c2c 0, #1c1614 26%, #0e0d0d 33%, #2a2a2a 42%, #2b2624 53%, #2a1010 60%, #0c0a0a 66%, #1a1a1a 74%, #303030 78%, #2d2d2d); color: #fff; }
.start { width: 60px; }
.search { width: 430px; background: #f2f2f2; display: flex; align-items: center; padding: 0 16px 0 12px; }
.search i { width: 27px; height: 27px; border: 4px solid #000; border-radius: 50%; }
.search input { flex: 1; min-width: 0; border: 0; outline: 0; background: none; padding: 0; margin-left: 12px; font: inherit; font-size: 16px; }
.search input::placeholder { color: #2b2b2b; opacity: 1; }
.taskview { width: 63px; padding-right: 3px; }
.apps { display: flex; }
.app { width: 62px; position: relative; }
.app svg { width: 28px; height: 28px; }
.app::after { content: ""; position: absolute; bottom: 0; left: 6px; right: 5px; height: 3px; }
.open::after, .current::after { background: #76b9ed; }
.stacked::after { background: linear-gradient(90deg, #76b9ed 40px, #5a8db8 40px); }
.current { background: linear-gradient(90deg, #444 56px, #222 56px, #353535 57px); }
.current::after { left: 0; right: 0; }
.tray { flex: 1; display: flex; align-items: center; justify-content: flex-end; gap: 11px; padding-right: 6px; }
.people { margin-right: 14px; }
.lang { margin-left: 1px; }
.clock { width: 86px; text-align: center; line-height: 24px; }
.notes { width: 52px; height: 50px; position: relative; border-right: 1px solid #777; justify-content: flex-start; padding-left: 7px; }
.notes b { position: absolute; left: 16px; top: 25px; width: 21px; height: 21px; border: 1px solid #999; border-radius: 50%; background: #2d2d2d; font-weight: 400; line-height: 19px; }
```
